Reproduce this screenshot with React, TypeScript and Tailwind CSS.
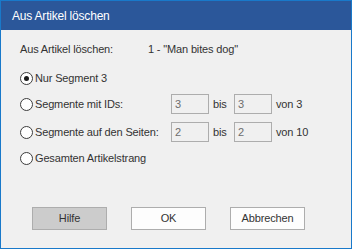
import React from 'react';

const font = { fontFamily: '"Liberation Sans", Arial, sans-serif' };

// Simple Windows-style radio button
const Radio: React.FC<{ checked?: boolean; label: string }> = ({ checked = false, label }) => (
  <div className="flex items-center h-[20px] whitespace-nowrap">
    <span className="w-[13px] h-[13px] shrink-0 rounded-full border border-[#3c3c3c] bg-white flex items-center justify-center">
      {checked && <span className="w-[5px] h-[5px] rounded-full bg-[#1a1a1a]" />}
    </span>
    <span className="ml-[2px]">{label}</span>
  </div>
);

const Field: React.FC<{ value: string }> = ({ value }) => (
  <div className="w-[38px] h-[20px] shrink-0 border border-[#adadad] bg-[#f0f0f0] text-[#6d6d6d] pl-[3px] flex items-center">
    {value}
  </div>
);

const RangeRow: React.FC<{ label: string; from: string; to: string; total: string }> = ({ label, from, to, total }) => (
  <div className="flex items-center h-[20px] whitespace-nowrap">
    <div className="w-[151px] shrink-0">
      <Radio label={label} />
    </div>
    <Field value={from} />
    <span className="ml-[4px] w-[21px] shrink-0">bis</span>
    <Field value={to} />
    <span className="ml-[4px]">{total}</span>
  </div>
);

export default function App() {
  return (
    <div
      className="w-[352px] h-[249px] border border-[#1979ca] bg-[#f0f0f0] flex flex-col text-[11px] tracking-[-0.15px] text-[#333333]"
      style={font}
    >
      <div className="h-[29px] bg-[#2b579a] text-white text-[12px] tracking-[-0.2px] pl-[11px] flex items-center">
        Aus Artikel löschen
      </div>
      <div className="flex flex-col pl-[19px] pt-[9px]">
        <div className="flex items-center h-[20px] whitespace-nowrap">
          <span className="w-[128px] shrink-0">Aus Artikel löschen:</span>
          <span>1 - "Man bites dog"</span>
        </div>
        <div className="flex flex-col mt-[9px]">
          <Radio checked label="Nur Segment 3" />
          <div className="mt-[6px]">
            <RangeRow label="Segmente mit IDs:" from="3" to="3" total="von 3" />
          </div>
          <div className="mt-[8px]">
            <RangeRow label="Segmente auf den Seiten:" from="2" to="2" total="von 10" />
          </div>
          <div className="mt-[6px]">
            <Radio label="Gesamten Artikelstrang" />
          </div>
        </div>
        <div className="flex gap-[24px] mt-[39px] pl-[12px]">
          <button className="w-[75px] h-[23px] border border-[#adadad] bg-[#cccccc]">Hilfe</button>
          <button className="w-[75px] h-[23px] border border-[#adadad] bg-[#fdfdfd]">OK</button>
          <button className="w-[75px] h-[23px] border border-[#adadad] bg-[#fdfdfd]">Abbrechen</button>
        </div>
      </div>
    </div>
  );
}
